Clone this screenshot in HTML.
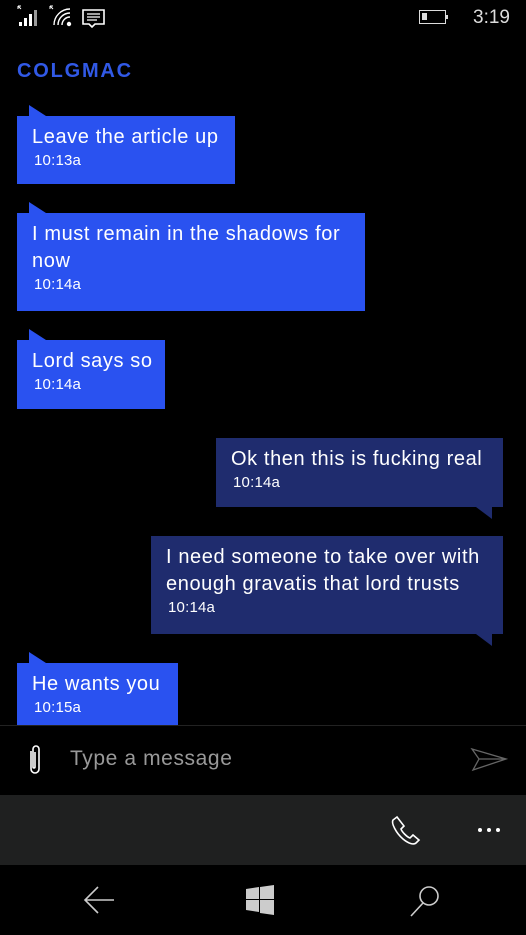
<!DOCTYPE html>
<html><head><meta charset="utf-8"><style>
*{margin:0;padding:0;box-sizing:border-box}
body{width:526px;height:935px;background:#000;position:relative;overflow:hidden;font-family:"Liberation Sans",sans-serif;color:#fff}
.b{position:absolute;padding:8px 0 0 15px;font-size:20px;line-height:27px;letter-spacing:0.6px}
.b .t{font-size:15px;line-height:20px;padding-left:2px;letter-spacing:0.2px}
.in{background:#2a52f0}
.out{background:#1f2c6e}
.in:before{content:"";position:absolute;left:12px;top:-11px;border-bottom:11px solid #2a52f0;border-right:17px solid transparent;width:0;height:0;}
.out:after{content:"";position:absolute;right:11px;bottom:-12px;border-top:12px solid #1f2c6e;border-left:16px solid transparent}
</style></head><body>
<svg style="position:absolute;left:16px;top:4px" width="100" height="26" viewBox="0 0 100 26" fill="#fff" stroke="#fff">
<path d="M2 2 L5 5 M2 2h3 M2 2v3" stroke-width="1" fill="none"/>
<rect x="3" y="18" width="3" height="4" stroke="none"/><rect x="8" y="14" width="3" height="8" stroke="none"/><rect x="13" y="10" width="3" height="12" stroke="none"/><rect x="18" y="6" width="3" height="16" stroke="none" fill="#999"/>
<path d="M34 2 L37 5 M34 2h3 M34 2v3" stroke-width="1" fill="none"/>
<path d="M38 21a16 16 0 0 1 16-16 M42 21a12 12 0 0 1 12-12 M46 21a8 8 0 0 1 8-8" fill="none" stroke-width="1.4"/>
<circle cx="53" cy="20" r="2.2" stroke="none"/>
<path d="M67 6h21v14h-9l-3 3-3-3h-6z" fill="none" stroke-width="1.6"/>
<path d="M71 10h13M71 13h13M71 16h10" stroke-width="1.3"/>
</svg>
<div style="position:absolute;left:419px;top:10px;width:27px;height:14px;border:1.5px solid #ddd"><div style="position:absolute;left:2px;top:2px;width:5px;height:7px;background:#ddd"></div></div>
<div style="position:absolute;left:446px;top:15px;width:2px;height:4px;background:#ddd"></div>
<div style="position:absolute;left:473px;top:7px;font-size:19px;color:#ddd">3:19</div>
<div style="position:absolute;left:17px;top:60px;font-size:20px;font-weight:bold;letter-spacing:1.8px;color:#3159e6">COLGMAC</div>

<div class="b in" style="left:17px;top:116px;width:218px;height:68px">Leave the article up<div class="t">10:13a</div></div>
<div class="b in" style="left:17px;top:213px;width:348px;height:98px">I must remain in the shadows for<br>now<div class="t">10:14a</div></div>
<div class="b in" style="left:17px;top:340px;width:148px;height:69px">Lord says so<div class="t">10:14a</div></div>
<div class="b out" style="left:216px;top:438px;width:287px;height:69px">Ok then this is fucking real<div class="t">10:14a</div></div>
<div class="b out" style="left:151px;top:536px;width:352px;height:98px">I need someone to take over with<br>enough gravatis that lord trusts<div class="t">10:14a</div></div>
<div class="b in" style="left:17px;top:663px;width:161px;height:62px">He wants you<div class="t">10:15a</div></div>

<div style="position:absolute;left:0;top:725px;width:526px;height:70px;background:#000;border-top:1px solid #222"></div>
<svg style="position:absolute;left:26px;top:743px" width="18" height="34" viewBox="0 0 18 34" fill="none" stroke="#fff" stroke-width="1.6"><path d="M5 8v18a4 4 0 0 0 8 0V6a3 3 0 0 0-6 0v18a1 1 0 0 0 2 0V9"/></svg>
<div style="position:absolute;left:70px;top:747px;font-size:21px;color:#999;letter-spacing:0.6px">Type a message</div>
<svg style="position:absolute;left:470px;top:746px" width="38" height="28" viewBox="0 0 38 28" fill="none" stroke="#666" stroke-width="1.3"><path d="M2 3L36 13L3 24L9 13Z M9 13H36"/></svg>

<div style="position:absolute;left:0;top:795px;width:526px;height:70px;background:#1f2020"></div>
<svg style="position:absolute;left:388px;top:814px" width="34" height="34" viewBox="0 0 34 34" fill="none" stroke="#fff" stroke-width="1.6"><path d="M9 3l-4 3c-2 3 3 13 10 19 6 5 11 6 13 4l3-3-6-5-3 3c-3-1-8-6-9-9l3-3z"/></svg>
<div style="position:absolute;left:478px;top:828px;width:4px;height:4px;background:#fff;border-radius:2px;box-shadow:9px 0 #fff,18px 0 #fff"></div>

<svg style="position:absolute;left:82px;top:884px" width="34" height="32" viewBox="0 0 34 32" fill="none" stroke="#ccc" stroke-width="1.6"><path d="M32 16H3M16 3L3 16l13 13"/></svg>
<svg style="position:absolute;left:246px;top:885px" width="30" height="30" viewBox="0 0 30 30" fill="#ccc"><path d="M0 4l13-2v12H0z M14 2l14-2v14H14z M0 15h13v12L0 25z M14 15h14v15l-14-2z"/></svg>
<svg style="position:absolute;left:408px;top:884px" width="34" height="34" viewBox="0 0 34 34" fill="none" stroke="#ccc" stroke-width="1.6"><circle cx="21" cy="12" r="9"/><path d="M15 19L3 32"/></svg>
</body></html>
